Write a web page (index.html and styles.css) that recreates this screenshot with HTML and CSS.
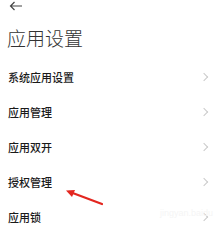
FILE: index.html
```html
<!DOCTYPE html>
<html lang="zh">
<head>
<meta charset="utf-8">
<link rel="stylesheet" href="styles.css">
</head>
<body>
<div class="page">
  <div class="topbar">
    <svg class="back" width="14" height="10" viewBox="0 0 14 10">
      <path d="M13 5H1.5M5.5 1L1.5 5L5.5 9" fill="none" stroke="#444" stroke-width="1.2"/>
    </svg>
  </div>
  <h1 class="title">应用设置</h1>
  <ul class="list">
    <li class="row"><span>系统应用设置</span><i class="chev"></i></li>
    <li class="row"><span>应用管理</span><i class="chev"></i></li>
    <li class="row"><span>应用双开</span><i class="chev"></i></li>
    <li class="row"><span>授权管理</span><i class="chev"></i></li>
    <li class="row"><span>应用锁</span><i class="chev"></i></li>
  </ul>
  <svg class="pointer" width="40" height="20" viewBox="0 0 40 20">
    <path d="M38 17L6 5" stroke="#e3261f" stroke-width="2.2" stroke-linecap="round"/>
    <path d="M2 3.5L11 3L8 10Z" fill="#e3261f"/>
  </svg>
  <div class="mark">jingyan.baidu</div>
</div>
</body>
</html>
```
FILE: styles.css
```css
html, body {
  margin: 0;
  padding: 0;
  background: #fff;
}
.page {
  position: relative;
  width: 216px;
  height: 233px;
  overflow: hidden;
  font-family: "Noto Sans CJK SC", "Noto Sans", sans-serif;
}
.topbar {
  height: 12px;
  padding-left: 9px;
  padding-top: 1px;
  box-sizing: border-box;
}
.back {
  display: block;
}
.title {
  margin: 16px 0 0 7px;
  font-size: 19px;
  line-height: 19px;
  font-weight: 300;
  color: #333;
}
.list {
  list-style: none;
  margin: 12px 0 0;
  padding: 0;
}
.row {
  height: 35px;
  display: flex;
  align-items: center;
  justify-content: space-between;
  padding: 0 9px 0 8px;
  font-size: 11px;
  font-weight: 500;
  color: #1a1a1a;
}
.chev {
  width: 5px;
  height: 5px;
  border-top: 1px solid #cacaca;
  border-right: 1px solid #cacaca;
  transform: rotate(45deg);
}
.pointer {
  position: absolute;
  left: 64px;
  top: 187px;
}
.mark {
  position: absolute;
  left: 160px;
  top: 208px;
  font-size: 9px;
  color: #f5f5f5;
  font-family: "Liberation Sans", sans-serif;
}
```
